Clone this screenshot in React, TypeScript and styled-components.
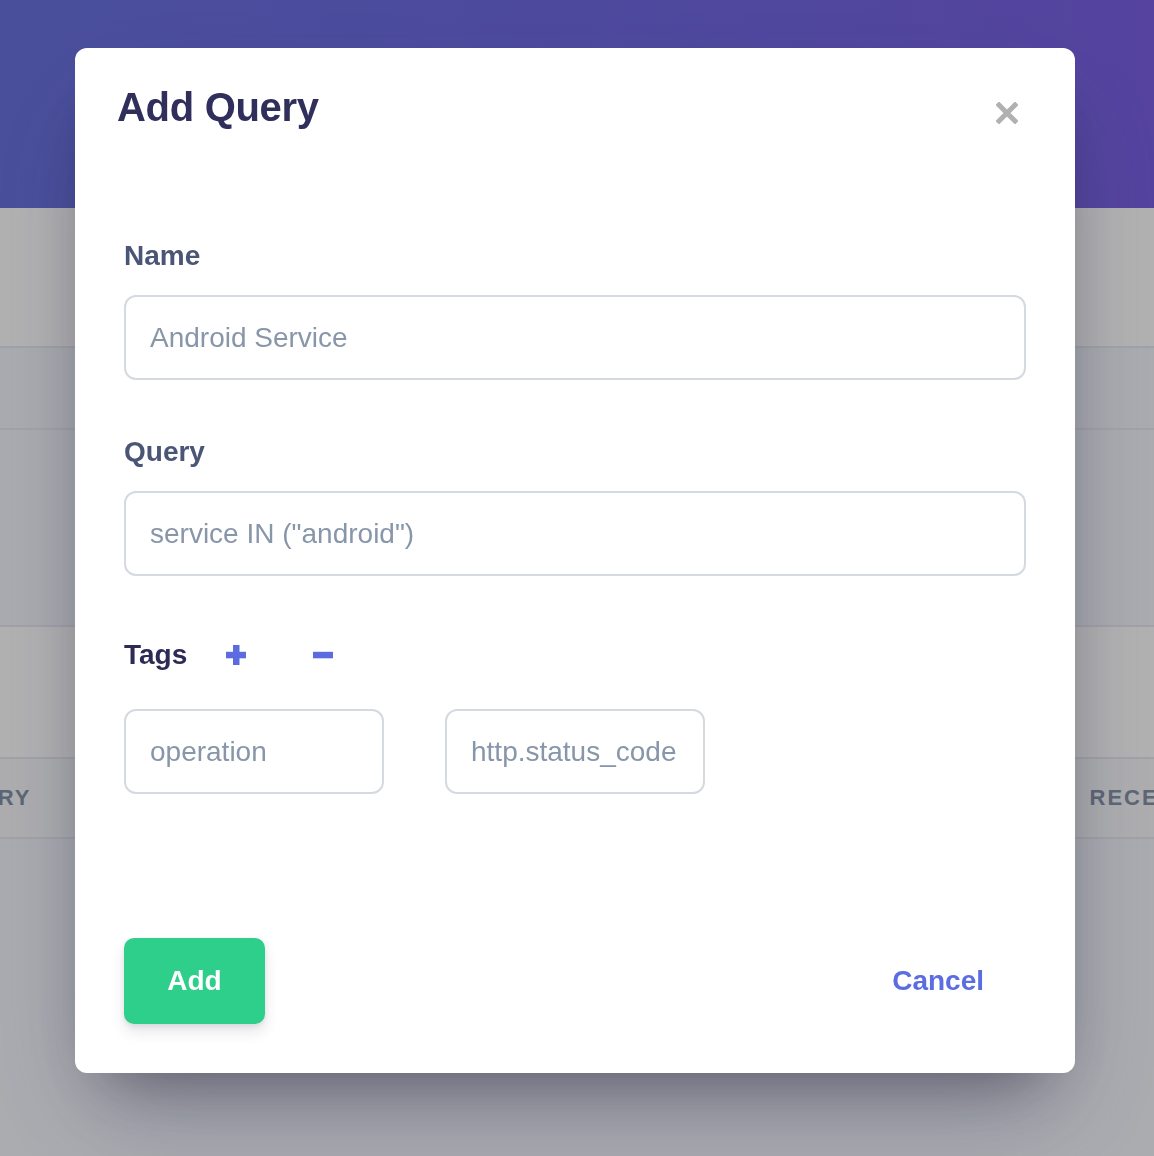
import styled, { createGlobalStyle } from "styled-components";

const GlobalStyle = createGlobalStyle`
  html, body {
    margin: 0;
    padding: 0;
  }
  body {
    font-family: "Liberation Sans", Arial, Helvetica, sans-serif;
    background: #f4f6fc;
  }
  * {
    box-sizing: border-box;
  }
`;

const Page = styled.div`
  position: relative;
  min-height: 1156px;
  overflow: hidden;
  background: #f4f6fc;
`;

const Hero = styled.header`
  height: 208px;
  background: linear-gradient(90deg, #6a72e0 0%, #6f6ae2 50%, #7a61e4 100%);
`;

const Band = styled.section<{ $tone: "white" | "soft"; $height: number }>`
  height: ${(p) => p.$height}px;
  background: ${(p) => (p.$tone === "white" ? "#ffffff" : "#f4f6fc")};
  border-bottom: 2px solid #e8eaf0;
`;

const TableHead = styled.div`
  height: 80px;
  display: flex;
  align-items: center;
  justify-content: space-between;
  margin: 0 -38px 0 -56px;
  background: #f9fafc;
  border-bottom: 2px solid #e8eaf0;
`;

const HeadCell = styled.span`
  font-size: 22px;
  font-weight: 700;
  letter-spacing: 2px;
  color: #8593a8;
`;

const Overlay = styled.div`
  position: fixed;
  inset: 0;
  background: rgba(0, 0, 0, 0.3);
  display: flex;
  justify-content: flex-start;
  align-items: flex-start;
  padding: 48px 0 0 75px;
`;

const Modal = styled.div`
  width: 1000px;
  background: #ffffff;
  border-radius: 12px;
  padding: 36px 49px 49px;
  box-shadow: 0 50px 100px -20px rgba(50, 50, 93, 0.35),
    0 30px 60px -30px rgba(0, 0, 0, 0.4);
`;

const ModalHeader = styled.div`
  display: flex;
  justify-content: space-between;
  align-items: flex-start;
  margin-left: -7px;
`;

const Title = styled.h2`
  margin: 0;
  font-size: 40px;
  line-height: 46px;
  font-weight: 700;
  color: #302e5a;
  letter-spacing: -0.3px;
`;

const CloseButton = styled.button`
  border: 0;
  background: none;
  padding: 0;
  margin: 18px 8px 0 0;
  width: 22px;
  height: 22px;
  cursor: pointer;
  display: flex;
`;

const Form = styled.form`
  padding-top: 110px;
`;

const Field = styled.div`
  margin-bottom: 56px;
`;

const Label = styled.label`
  display: block;
  font-size: 28px;
  line-height: 32px;
  font-weight: 700;
  color: #4b5677;
  margin-bottom: 23px;
`;

const Input = styled.input<{ $width?: number }>`
  display: block;
  width: ${(p) => (p.$width ? `${p.$width}px` : "100%")};
  height: 85px;
  border: 2px solid #d5d9e0;
  border-radius: 12px;
  padding: 0 24px;
  font-family: inherit;
  font-size: 28px;
  color: #3a4560;
  background: #fff;
  outline: none;
  &::placeholder {
    color: #8896a9;
  }
`;

const TagsHeader = styled.div`
  display: flex;
  align-items: center;
  height: 32px;
  margin-top: 63px;
  margin-bottom: 38px;
`;

const TagsLabel = styled.span`
  font-size: 28px;
  line-height: 32px;
  font-weight: 700;
  color: #2d2b55;
`;

const IconButton = styled.button<{ $gap: number }>`
  border: 0;
  background: none;
  padding: 0;
  margin-left: ${(p) => p.$gap}px;
  display: flex;
  align-items: center;
  cursor: pointer;
`;

const TagRow = styled.div`
  display: flex;
  gap: 61px;
`;

const Footer = styled.div`
  display: flex;
  justify-content: space-between;
  align-items: center;
  margin-top: 144px;
`;

const AddButton = styled.button`
  width: 141px;
  height: 86px;
  border: 0;
  border-radius: 10px;
  background: #2ecf8a;
  color: #ffffff;
  font-family: inherit;
  font-size: 28px;
  font-weight: 700;
  padding: 0;
  box-shadow: 0 8px 14px rgba(50, 50, 93, 0.12), 0 2px 5px rgba(0, 0, 0, 0.08);
  cursor: pointer;
`;

const CancelButton = styled.button`
  height: 86px;
  border: 0;
  background: none;
  padding: 0 42px;
  color: #5b6de0;
  font-family: inherit;
  font-size: 28px;
  font-weight: 700;
  cursor: pointer;
`;

const CloseIcon = () => (
  <svg width="22" height="22" viewBox="0 0 22 22">
    <path
      d="M3 3 L19 19 M19 3 L3 19"
      stroke="#b1b1b1"
      strokeWidth="5"
      strokeLinecap="square"
    />
  </svg>
);

const PlusIcon = () => (
  <svg width="20" height="20" viewBox="0 0 20 20">
    <rect x="7" y="0" width="6.5" height="20" fill="#5c6ce0" />
    <rect x="0" y="6.8" width="20" height="6.5" fill="#5c6ce0" />
  </svg>
);

const MinusIcon = () => (
  <svg width="20" height="20" viewBox="0 0 20 20">
    <rect x="0" y="6.8" width="20" height="6.5" fill="#5c6ce0" />
  </svg>
);

export default function App() {
  return (
    <>
      <GlobalStyle />
      <Page>
        <Hero />
        <Band $tone="white" $height={140} />
        <Band $tone="soft" $height={82} />
        <Band $tone="soft" $height={197} />
        <Band $tone="white" $height={132} />
        <TableHead>
          <HeadCell>QUERY</HeadCell>
          <HeadCell>RECENT</HeadCell>
        </TableHead>
      </Page>
      <Overlay>
        <Modal>
          <ModalHeader>
            <Title>Add Query</Title>
            <CloseButton type="button" aria-label="Close">
              <CloseIcon />
            </CloseButton>
          </ModalHeader>
          <Form onSubmit={(e) => e.preventDefault()}>
            <Field>
              <Label htmlFor="q-name">Name</Label>
              <Input id="q-name" placeholder="Android Service" />
            </Field>
            <Field>
              <Label htmlFor="q-query">Query</Label>
              <Input id="q-query" placeholder={'service IN ("android")'} />
            </Field>
            <TagsHeader>
              <TagsLabel>Tags</TagsLabel>
              <IconButton type="button" $gap={39} aria-label="Add tag">
                <PlusIcon />
              </IconButton>
              <IconButton type="button" $gap={67} aria-label="Remove tag">
                <MinusIcon />
              </IconButton>
            </TagsHeader>
            <TagRow>
              <Input $width={260} placeholder="operation" />
              <Input $width={260} placeholder="http.status_code" />
            </TagRow>
            <Footer>
              <AddButton type="submit">Add</AddButton>
              <CancelButton type="button">Cancel</CancelButton>
            </Footer>
          </Form>
        </Modal>
      </Overlay>
    </>
  );
}
